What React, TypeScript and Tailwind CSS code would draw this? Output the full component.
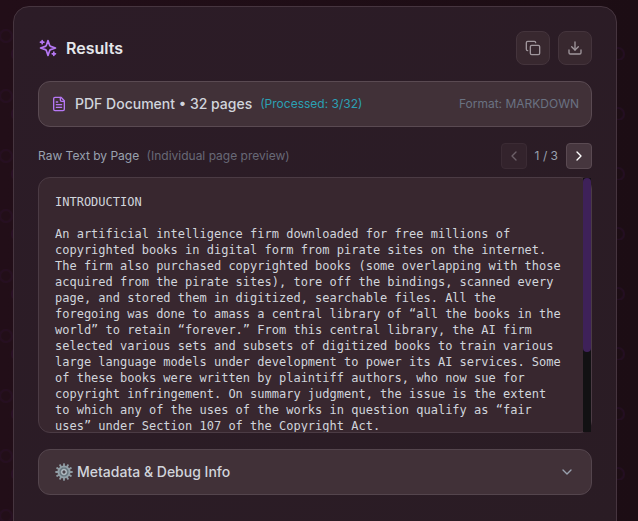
import { useState } from "react";
import { ChevronDown, ChevronLeft, ChevronRight, Copy, Download } from "lucide-react";

const pageText = `INTRODUCTION

An artificial intelligence firm downloaded for free millions of copyrighted books in digital form from pirate sites on the internet. The firm also purchased copyrighted books (some overlapping with those acquired from the pirate sites), tore off the bindings, scanned every page, and stored them in digitized, searchable files. All the foregoing was done to amass a central library of “all the books in the world” to retain “forever.” From this central library, the AI firm selected various sets and subsets of digitized books to train various large language models under development to power its AI services. Some of these books were written by plaintiff authors, who now sue for copyright infringement. On summary judgment, the issue is the extent to which any of the uses of the works in question qualify as “fair uses” under Section 107 of the Copyright Act.`;

const pageCount = 3;

function BackgroundPattern() {
  return (
    <svg aria-hidden="true" className="pointer-events-none absolute inset-0 h-full w-full">
      <defs>
        <pattern id="rings" width="60" height="60" patternUnits="userSpaceOnUse">
          <circle cx="6" cy="36" r="6" fill="none" stroke="#7e22ce" strokeOpacity="0.05" strokeWidth="2" />
          <circle cx="18" cy="54" r="6" fill="none" stroke="#7e22ce" strokeOpacity="0.07" strokeWidth="2" />
        </pattern>
      </defs>
      <rect width="100%" height="100%" fill="url(#rings)" />
    </svg>
  );
}

function SparklesIcon() {
  return (
    <svg
      aria-hidden="true"
      viewBox="0 0 24 24"
      fill="none"
      stroke="currentColor"
      strokeWidth="2"
      strokeLinecap="round"
      strokeLinejoin="round"
      className="size-5 text-[#b678f5]"
    >
      <path d="m12 3-1.912 5.813a2 2 0 0 1-1.275 1.275L3 12l5.813 1.912a2 2 0 0 1 1.275 1.275L12 21l1.912-5.813a2 2 0 0 1 1.275-1.275L21 12l-5.813-1.912a2 2 0 0 1-1.275-1.275L12 3Z" />
      <path d="M5 3v4M3 5h4M19 17v4M17 19h4" />
    </svg>
  );
}

function DocumentIcon() {
  return (
    <svg
      aria-hidden="true"
      viewBox="0 0 24 24"
      fill="none"
      stroke="currentColor"
      strokeWidth="2"
      strokeLinecap="round"
      strokeLinejoin="round"
      className="size-4 text-[#b678f5]"
    >
      <path d="M15 2H6a2 2 0 0 0-2 2v16a2 2 0 0 0 2 2h12a2 2 0 0 0 2-2V7Z" />
      <path d="M14 2v4a2 2 0 0 0 2 2h4M10 9H8M16 13H8M16 17H8" />
    </svg>
  );
}

function GearIcon() {
  const teeth = Array.from({ length: 12 }, (_, i) => i * 30);

  return (
    <svg aria-hidden="true" viewBox="0 0 18 18" className="h-[18px] w-[18px] shrink-0">
      {teeth.map((angle) => (
        <rect
          key={angle}
          x="8.1"
          y="0.3"
          width="1.8"
          height="3"
          rx="0.4"
          fill="#8f9ca4"
          transform={`rotate(${angle} 9 9)`}
        />
      ))}
      <circle cx="9" cy="9" r="5.6" fill="#66747d" stroke="#929fa7" strokeWidth="1.8" />
      <circle cx="9" cy="9" r="2.3" fill="#4a434b" stroke="#b9c4ca" strokeWidth="1.3" />
      <path d="M9 4v2.2M9 11.8V14M4 9h2.2M11.8 9H14" stroke="#87949c" strokeWidth="0.8" />
    </svg>
  );
}

export default function App() {
  const [page, setPage] = useState(1);

  return (
    <main className="relative min-h-screen overflow-hidden bg-linear-to-r from-[#220e18] to-[#1c0d14] pt-[6px] pr-[21px] pl-[13px] font-['Inter',sans-serif]">
      <BackgroundPattern />
      <section className="relative -mb-4 min-h-[calc(100vh+10px)] rounded-2xl border border-[#46353f] bg-linear-to-br from-[#2c1c27] to-[#2a1c24] p-6">
        <header className="flex items-center justify-between">
          <div className="flex items-center gap-2">
            <SparklesIcon />
            <h1 className="text-base font-semibold text-gray-200">Results</h1>
          </div>
          <div className="flex gap-2">
            <button
              type="button"
              aria-label="Copy"
              className="flex size-[34px] items-center justify-center rounded-lg border border-[#44343c] bg-[#38282f] text-[#a0979d]"
            >
              <Copy size={16} />
            </button>
            <button
              type="button"
              aria-label="Download"
              className="flex size-[34px] items-center justify-center rounded-lg border border-[#44343c] bg-[#38282f] text-[#a0979d]"
            >
              <Download size={16} />
            </button>
          </div>
        </header>

        <div className="mt-4 flex h-[46px] items-center rounded-xl border border-[#5a4a52] bg-[#413138] px-3">
          <DocumentIcon />
          <span className="ml-2 text-sm font-medium text-gray-300">PDF Document • 32 pages</span>
          <span className="ml-2 text-xs text-[#2ba0b4]">(Processed: 3/32)</span>
          <span className="ml-auto text-xs text-[#6a7282]">Format: MARKDOWN</span>
        </div>

        <div className="mt-4 flex items-center justify-between">
          <h2 className="text-xs text-gray-400">
            Raw Text by Page <span className="ml-1 text-[#686977]">(Individual page preview)</span>
          </h2>
          <div className="flex items-center gap-2">
            <button
              type="button"
              aria-label="Previous page"
              disabled={page === 1}
              onClick={() => setPage(page - 1)}
              className="flex size-[26px] items-center justify-center rounded-sm border border-[#5a4a52] bg-[#46363e] text-white disabled:border-[#3b2b34] disabled:bg-[#33232c] disabled:text-[#6c6068]"
            >
              <ChevronLeft size={16} />
            </button>
            <span className="text-xs text-gray-400">
              {page} / {pageCount}
            </span>
            <button
              type="button"
              aria-label="Next page"
              disabled={page === pageCount}
              onClick={() => setPage(page + 1)}
              className="flex size-[26px] items-center justify-center rounded-sm border border-[#5a4a52] bg-[#46363e] text-white disabled:border-[#3b2b34] disabled:bg-[#33232c] disabled:text-[#6c6068]"
            >
              <ChevronRight size={16} />
            </button>
          </div>
        </div>

        <div className="relative mt-2 h-64 rounded-xl border border-[#4b3b44] bg-[#38272f]">
          <pre className="h-full overflow-hidden py-4 pr-6 pl-4 font-['DejaVu_Sans_Mono',monospace] text-xs whitespace-pre-wrap text-gray-300">
            {pageText}
          </pre>
          <div aria-hidden="true" className="absolute inset-y-0 right-0 w-2 bg-[#121113]">
            <div className="h-[174px] rounded-sm bg-[#3e2159]" />
          </div>
        </div>

        <button
          type="button"
          aria-expanded="false"
          className="mt-4 flex h-[46px] w-full items-center gap-1 rounded-xl border border-[#54454d] bg-[#413138] px-4 text-sm font-medium text-gray-300"
        >
          <GearIcon />
          Metadata &amp; Debug Info
          <ChevronDown aria-hidden="true" size={16} className="ml-auto text-gray-400" />
        </button>
      </section>
    </main>
  );
}
